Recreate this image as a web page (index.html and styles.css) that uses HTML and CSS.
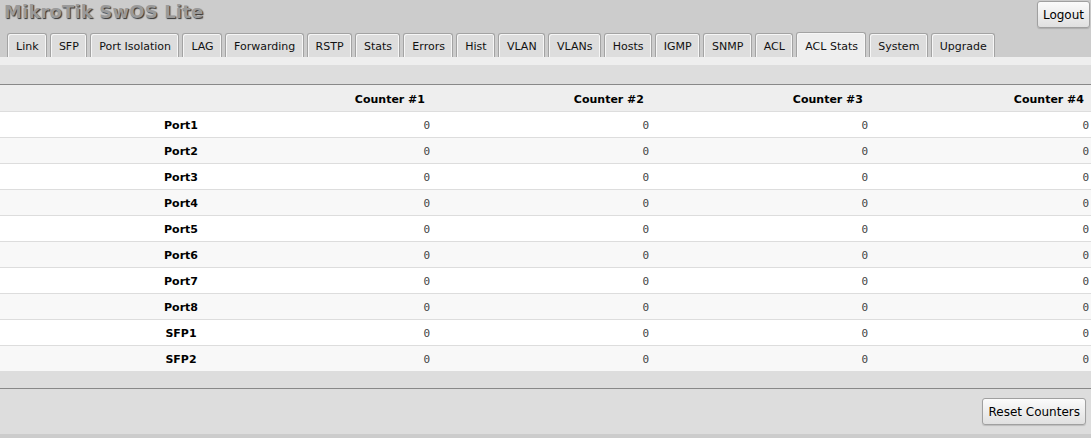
FILE: index.html
```html
<!DOCTYPE html>
<html>
<head>
<meta charset="utf-8">
<link rel="stylesheet" href="styles.css">
</head>
<body>
<div class="top">
  <div class="title">MikroTik SwOS Lite</div>
  <button class="btn logout">Logout</button>
</div>
<div class="tabs">
  <div class="tab">Link</div>
  <div class="tab">SFP</div>
  <div class="tab">Port Isolation</div>
  <div class="tab">LAG</div>
  <div class="tab">Forwarding</div>
  <div class="tab">RSTP</div>
  <div class="tab">Stats</div>
  <div class="tab">Errors</div>
  <div class="tab">Hist</div>
  <div class="tab">VLAN</div>
  <div class="tab">VLANs</div>
  <div class="tab">Hosts</div>
  <div class="tab">IGMP</div>
  <div class="tab">SNMP</div>
  <div class="tab">ACL</div>
  <div class="tab active">ACL Stats</div>
  <div class="tab">System</div>
  <div class="tab">Upgrade</div>
</div>
<div class="strip"></div>
<div class="band"></div>
<div class="table">
  <div class="row head"><div class="lbl"></div><div class="c">Counter #1</div><div class="c">Counter #2</div><div class="c">Counter #3</div><div class="c">Counter #4</div></div>
  <div class="row"><div class="lbl">Port1</div><div class="v">0</div><div class="v">0</div><div class="v">0</div><div class="v">0</div></div>
  <div class="row"><div class="lbl">Port2</div><div class="v">0</div><div class="v">0</div><div class="v">0</div><div class="v">0</div></div>
  <div class="row"><div class="lbl">Port3</div><div class="v">0</div><div class="v">0</div><div class="v">0</div><div class="v">0</div></div>
  <div class="row"><div class="lbl">Port4</div><div class="v">0</div><div class="v">0</div><div class="v">0</div><div class="v">0</div></div>
  <div class="row"><div class="lbl">Port5</div><div class="v">0</div><div class="v">0</div><div class="v">0</div><div class="v">0</div></div>
  <div class="row"><div class="lbl">Port6</div><div class="v">0</div><div class="v">0</div><div class="v">0</div><div class="v">0</div></div>
  <div class="row"><div class="lbl">Port7</div><div class="v">0</div><div class="v">0</div><div class="v">0</div><div class="v">0</div></div>
  <div class="row"><div class="lbl">Port8</div><div class="v">0</div><div class="v">0</div><div class="v">0</div><div class="v">0</div></div>
  <div class="row"><div class="lbl">SFP1</div><div class="v">0</div><div class="v">0</div><div class="v">0</div><div class="v">0</div></div>
  <div class="row"><div class="lbl">SFP2</div><div class="v">0</div><div class="v">0</div><div class="v">0</div><div class="v">0</div></div>
</div>
<div class="band2"></div>
<div class="footer">
  <button class="btn">Reset Counters</button>
</div>
</body>
</html>
```
FILE: styles.css
```css
html, body {
  margin: 0;
  padding: 0;
}
body {
  background: #cccccc;
  font-family: "DejaVu Sans", Verdana, sans-serif;
  font-size: 11px;
  color: #000;
  height: 438px;
  overflow: hidden;
}
.top {
  display: flex;
  justify-content: space-between;
  align-items: flex-start;
  height: 33px;
}
.title {
  font-size: 18px;
  letter-spacing: 0.15px;
  font-weight: bold;
  color: #9a9a9a;
  text-shadow: 1px 1px 1px #333;
  padding: 1px 0 0 4px;
  line-height: 21px;
}
.btn {
  font-family: "DejaVu Sans", Verdana, sans-serif;
  font-size: 12px;
  color: #000;
  height: 27px;
  padding: 0 5px;
  border: 1px solid #a0a0a0;
  border-radius: 3px;
  background: linear-gradient(#fbfbfb, #e0e0e0);
  box-shadow: 0 1px 1px rgba(0,0,0,0.15);
}
.logout {
  margin: 1px 1px 0 0;
}
.tabs {
  display: flex;
  align-items: flex-end;
  gap: 3px;
  padding-left: 7px;
  height: 24px;
}
.tab {
  height: 24px;
  box-sizing: border-box;
  line-height: 25px;
  padding: 0 7.35px 0 8px;
  border: 1px solid #a3a3a3;
  border-bottom: none;
  border-radius: 3px 3px 0 0;
  background: #dddddd;
  box-shadow: inset 1px 1px 0 #f6f6f6, inset -1px 0 0 #f6f6f6;
  color: #111;
}
.tab.active {
  height: 25px;
  line-height: 27px;
  background: #eeeeee;
}
.strip {
  height: 8px;
  background: #eeeeee;
}
.band {
  height: 19px;
  background: #dddddd;
  border-bottom: 1px solid #888888;
}
.row {
  display: grid;
  grid-template-columns: 362px 70px 219px 219px 1fr;
  height: 25px;
  box-sizing: content-box;
  border-bottom: 1px solid #dddddd;
  background: #ffffff;
}
.row > div {
  padding-top: 2px;
}
.row:nth-child(odd) {
  background: #f8f8f8;
}
.row.head {
  height: 26px;
  background: #eeeeee;
  font-weight: bold;
}
.lbl {
  display: flex;
  align-items: center;
  justify-content: center;
  font-weight: bold;
}
.c, .v {
  display: flex;
  align-items: center;
  justify-content: flex-end;
  white-space: nowrap;
}
.c {
  padding-right: 7px;
}
.v {
  padding-right: 2px;
  font-family: "DejaVu Sans Mono", monospace;
  font-size: 11px;
  color: #444;
}
.band2 {
  height: 16px;
  background: #dddddd;
  border-bottom: 1px solid #888888;
}
.footer {
  display: flex;
  justify-content: flex-end;
  align-items: flex-start;
  height: 36px;
  padding: 9px 5px 0 0;
  background: #dddddd;
}
```
